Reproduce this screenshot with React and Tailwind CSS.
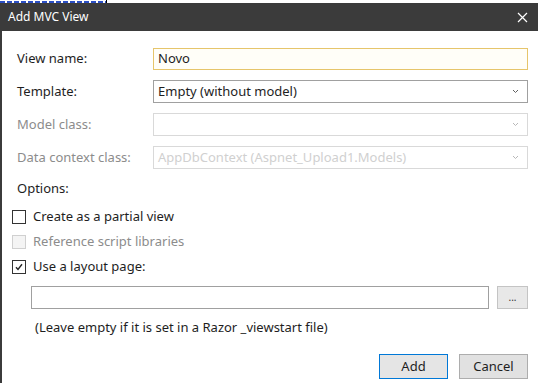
import React from 'react';

const font = { fontFamily: '"Noto Sans", "Open Sans", Arial, sans-serif' };

const Chevron = ({ color = '#606060' }) => (
  <svg width="7" height="5" viewBox="0 0 7 5" fill="none">
    <path d="M1 1l2.5 2.5L6 1" stroke={color} strokeWidth="1" />
  </svg>
);

const Row = ({ label, disabled, children }) => (
  <div className="flex items-center h-[23px]">
    <div className={`w-[151px] pl-[15px] ${disabled ? 'text-[#8c8c8c]' : 'text-[#1e1e1e]'}`}>{label}</div>
    <div className="flex-1">{children}</div>
  </div>
);

const Select = ({ value, disabled }) => (
  <div
    className={`h-[23px] flex items-center justify-between pl-[4px] pr-[8px] border ${
      disabled ? 'border-[#d9d9d9] text-[#d0d0d0]' : 'border-[#a0a0a0] text-[#1e1e1e]'
    }`}
  >
    <span>{value}</span>
    <Chevron color={disabled ? '#b8b8b8' : '#606060'} />
  </div>
);

const Check = ({ checked, disabled, label }) => (
  <div className="flex items-center h-[20px] pl-[10px]">
    <div
      className={`w-[14px] h-[14px] border flex items-center justify-center ${
        disabled ? 'border-[#d0d0d0] bg-[#f4f4f4]' : 'border-[#333] bg-white'
      }`}
    >
      {checked && (
        <svg width="10" height="10" viewBox="0 0 10 10" fill="none">
          <path d="M2 5.2l2 2.2L8 2.3" stroke="#222" strokeWidth="1.4" />
        </svg>
      )}
    </div>
    <span className={`ml-[7px] ${disabled ? 'text-[#8c8c8c]' : 'text-[#1e1e1e]'}`}>{label}</span>
  </div>
);

export default function App() {
  return (
    <div className="w-[538px] h-[383px] bg-white overflow-hidden text-[13px]" style={font}>
      {/* sliver of the window behind the dialog */}
      <div className="h-[3px] flex items-end">
        <div className="w-[106px] h-[2px] bg-[repeating-linear-gradient(90deg,#2b4fc4_0_5px,transparent_5px_7px)]" />
        <div className="w-[1px] h-[3px] bg-black" />
      </div>
      <div className="h-[28px] bg-[#3b3b3b] flex items-center justify-between pl-[8px] pr-[10px] text-white text-[12px]">
        <span>Add MVC View</span>
        <svg width="11" height="11" viewBox="0 0 11 11">
          <path d="M1 1l9 9M10 1l-9 9" stroke="#fff" strokeWidth="1.2" />
        </svg>
      </div>
      <div className="border-l-2 border-[#3b3b3b] h-[352px] pr-[10px] flex flex-col">
        <div className="mt-[16px] flex flex-col gap-[10px]">
          <Row label="View name:">
            <div className="h-[22px] border border-[#e6c56b] bg-[#fffef8] pl-[4px] flex items-center text-[#1e1e1e]">Novo</div>
          </Row>
          <Row label="Template:">
            <Select value="Empty (without model)" />
          </Row>
          <Row label="Model class:" disabled>
            <Select value="" disabled />
          </Row>
          <Row label="Data context class:" disabled>
            <Select value="AppDbContext (Aspnet_Upload1.Models)" disabled />
          </Row>
        </div>
        <div className="mt-[10px] pl-[15px] text-[#1e1e1e] h-[20px] flex items-center">Options:</div>
        <div className="mt-[8px] flex flex-col gap-[5px]">
          <Check label="Create as a partial view" />
          <Check label="Reference script libraries" disabled />
          <Check label="Use a layout page:" checked />
        </div>
        <div className="mt-[9px] pl-[29px] flex gap-[8px]">
          <div className="flex-1 h-[23px] border border-[#a0a0a0]" />
          <div className="w-[31px] h-[23px] border border-[#c4c4c4] bg-[#e8e8e8] flex items-center justify-center text-[10px] text-[#333] leading-none pb-[2px]">...</div>
        </div>
        <div className="mt-[9px] pl-[33px] text-[#1e1e1e] h-[20px] flex items-center">(Leave empty if it is set in a Razor _viewstart file)</div>
        <div className="mt-[16px] flex justify-end gap-[11px]">
          <div className="w-[69px] h-[25px] border border-[#0078d7] bg-[#e5e5e5] flex items-center justify-center text-[#1e1e1e]">Add</div>
          <div className="w-[69px] h-[25px] border border-[#adadad] bg-[#e1e1e1] flex items-center justify-center text-[#1e1e1e]">Cancel</div>
        </div>
      </div>
    </div>
  );
}
